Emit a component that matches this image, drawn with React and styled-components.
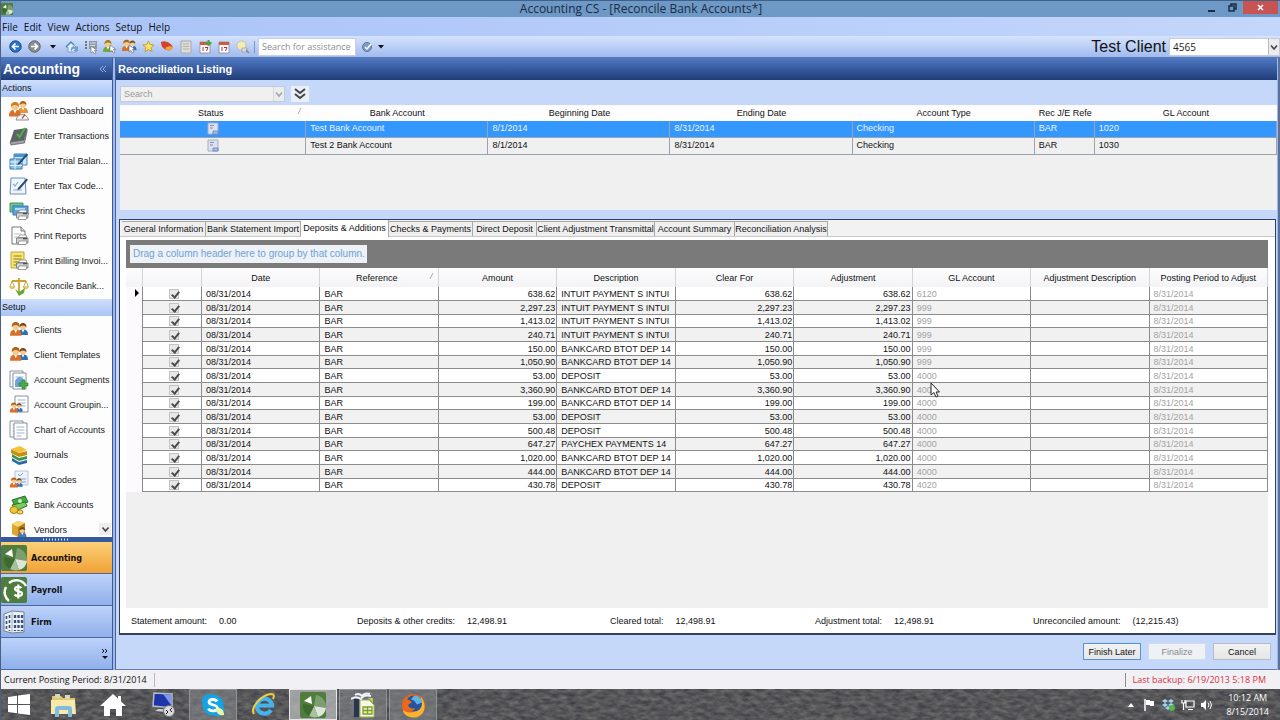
import { useState } from 'react';
import styled, { createGlobalStyle, ThemeProvider, css } from 'styled-components';

const theme = {
  fonts: {
    main: '"Liberation Sans", Arial, sans-serif',
    ui: '"Open Sans", "Noto Sans", sans-serif',
  },
  colors: {
    panel: '#c5d8fa',
    grey: '#f0f0f0',
    line: '#8c8c8c',
    select: '#3497fd',
    navy: '#1f3d78',
  },
};

const GlobalStyle = createGlobalStyle`
  * {
    box-sizing: border-box;
  }
  body {
    margin: 0;
    overflow: hidden;
    font-family: ${theme.fonts.main};
    font-size: 9px;
    color: #111;
  }
  button, input, select {
    font: inherit;
    color: inherit;
  }
  button {
    padding: 0;
    border: 0;
    background: none;
  }
`;

const Shell = styled.div`
  display: flex;
  flex-direction: column;
  height: 100vh;
  border-left: 1px solid #4d5f82;
  background: #9db9ee;
`;

/* title, menu and tool bars */

const TitleBar = styled.header`
  display: flex;
  align-items: center;
  flex: 0 0 17px;
  padding-right: 2px;
  border-top: 1px solid #3f6188;
  background: #6e98c6;
  svg {
    display: block;
  }
`;

const TitleText = styled.h1`
  flex: 1;
  margin: 0;
  padding-left: 68px;
  font: 400 12px/14px ${({ theme }) => theme.fonts.ui};
  text-align: center;
  color: #1b2c44;
`;

const WindowButton = styled.button`
  display: flex;
  justify-content: center;
  align-items: center;
  width: ${({ $close }) => ($close ? '35px' : '21px')};
  height: 13px;
  align-self: flex-start;
  background: ${({ $close }) => ($close ? '#c75453' : 'none')};
`;

const MenuBar = styled.nav`
  display: flex;
  align-items: center;
  gap: 6px;
  flex: 0 0 19px;
  padding-left: 1px;
  background: linear-gradient(90deg, #a9c3f8, #c3d6fb);
  font: 10px/18px ${({ theme }) => theme.fonts.ui};
`;

const ToolBar = styled.div`
  display: flex;
  align-items: center;
  gap: 3px;
  flex: 0 0 22px;
  padding-left: 6px;
  border-bottom: 1px solid #5a77ac;
  background: linear-gradient(#d6e3fd, #a0bbef);
`;

const ToolButton = styled.button`
  display: flex;
  justify-content: center;
  align-items: center;
  width: 16px;
  height: 18px;
`;

const Separator = styled.span`
  width: 1px;
  height: 12px;
  background: #7d95c4;
`;

const AssistInput = styled.input`
  width: 98px;
  height: 18px;
  padding: 0 3px;
  border: 1px solid #c4cfe4;
  background: #fff;
  font: 9px ${({ theme }) => theme.fonts.ui};
  &::placeholder {
    color: #8d8d8d;
  }
`;

const ClientLabel = styled.label`
  display: flex;
  align-items: center;
  gap: 3px;
  margin-left: auto;
  font: 16px ${({ theme }) => theme.fonts.main};
  color: #111;
`;

const SelectBox = styled.span`
  position: relative;
  display: flex;
  width: ${({ $width }) => $width};
  height: ${({ $height }) => $height};
  select {
    width: 100%;
    padding: 0 3px;
    border: 1px solid #c3cbda;
    border-radius: 0;
    appearance: none;
    background: ${({ $muted }) => ($muted ? '#f0f0f0' : '#fff')};
    color: ${({ $muted }) => ($muted ? '#9a9a9a' : '#1c1c1c')};
    font: ${({ $muted, theme }) => ($muted ? `9px ${theme.fonts.main}` : `10px ${theme.fonts.ui}`)};
  }
  svg {
    position: absolute;
    top: 1px;
    right: 1px;
    height: calc(100% - 2px);
    border-left: 1px solid ${({ $muted }) => ($muted ? '#d9d9d9' : '#bbb')};
    background: #ececec;
    pointer-events: none;
  }
`;

/* sidebar */

const Body = styled.div`
  display: flex;
  flex: 1;
  min-height: 0;
  padding-right: 1px;
  border-right: 2px solid #5b7199;
`;

const Sidebar = styled.aside`
  display: flex;
  flex-direction: column;
  flex: 0 0 112px;
  min-width: 0;
  border-right: 1px solid #3a5b99;
`;

const Heading = styled.h2`
  display: flex;
  justify-content: space-between;
  align-items: center;
  flex: 0 0 22px;
  margin: 0;
  padding: 0 5px 0 2px;
  background: linear-gradient(#5079c4, ${({ theme }) => theme.colors.navy});
  color: #fff;
  font: 700 ${({ $big }) => ($big ? '14px' : '11px')} ${({ theme }) => theme.fonts.main};
`;

const GroupTitle = styled.h3`
  flex: 0 0 17px;
  margin: 0;
  padding-left: 1px;
  background: linear-gradient(#cfdffd, #a9c4f6);
  font-size: 9px;
  font-weight: 400;
  line-height: 17px;
`;

const LinkList = styled.ul`
  position: relative;
  flex: ${({ $fill }) => ($fill ? '1 1 0' : '0 0 202px')};
  min-height: 0;
  margin: 0;
  padding: 1px 0;
  overflow: hidden;
  list-style: none;
  background: #fdfdfe;
  a {
    display: flex;
    align-items: center;
    gap: 5px;
    height: 25px;
    padding-left: 8px;
    color: #222;
    text-decoration: none;
    white-space: nowrap;
  }
  svg {
    flex: none;
  }
`;

const ScrollDown = styled.button`
  position: absolute;
  right: 1px;
  bottom: 2px;
  width: 12px;
  height: 12px;
  background: #eee;
  line-height: 0;
`;

const Grip = styled.div`
  flex: 0 0 5px;
  background: radial-gradient(circle, #dbe6fb 1px, transparent 1px) center / 3px 4px, #355a9c;
  border-left: 40px solid #355a9c;
  border-right: 42px solid #355a9c;
`;

const NavButton = styled.button`
  display: flex;
  align-items: center;
  gap: 4px;
  flex: 0 0 32px;
  border-bottom: 1px solid #4868a3;
  background: ${({ $active }) =>
    $active ? 'linear-gradient(#fcd07a, #f0a235)' : 'linear-gradient(#bdd2fa, #8fb0ea)'};
  font: 700 9px 'DejaVu Sans Condensed', 'DejaVu Sans', sans-serif;
  ${({ $more }) =>
    $more &&
    css`
      justify-content: flex-end;
      padding-right: 4px;
    `}
`;

/* content */

const Content = styled.main`
  display: flex;
  flex-direction: column;
  flex: 1;
  min-width: 0;
  margin-left: 2px;
  border-left: 1px solid #4a6396;
  border-bottom: 1px solid #6b7fa8;
  background: ${({ theme }) => theme.colors.panel};
`;

const SearchRow = styled.div`
  display: flex;
  align-items: center;
  gap: 6px;
  flex: 0 0 25px;
  padding: 3px 0 0 4px;
`;

const Expand = styled.button`
  display: flex;
  justify-content: center;
  align-items: center;
  width: 18px;
  height: 16px;
  background: #e9eef8;
`;

const ListingArea = styled.div`
  flex: 0 0 105px;
  margin-left: 4px;
  background: ${({ theme }) => theme.colors.grey};
`;

const Table = styled.table`
  width: 100%;
  table-layout: fixed;
  border-collapse: separate;
  border-spacing: 0;
  th,
  td {
    padding: 0 4px;
    overflow: hidden;
    font-weight: 400;
    white-space: nowrap;
  }
`;

const ListingTable = styled(Table)`
  th {
    height: 16px;
    background: #fdfdfe;
  }
  td {
    height: 17px;
    border-right: 1px solid #9aa3b0;
    border-bottom: 1px solid #9aa3b0;
    line-height: 14px;
    vertical-align: top;
  }
  td:first-child {
    text-align: center;
  }
  svg {
    display: inline-block;
    vertical-align: middle;
  }
`;

const ListingRow = styled.tr`
  background: ${({ $selected, theme }) => ($selected ? theme.colors.select : '#f0f0f0')};
  color: ${({ $selected }) => ($selected ? '#eaf4ff' : 'inherit')};
`;

const TabPanel = styled.section`
  display: flex;
  flex-direction: column;
  flex: 1;
  min-height: 0;
  margin: 9px 1px 0 3px;
  border: 1px solid #33415e;
  border-bottom-width: 2px;
  background: #fff;
`;

const TabList = styled.div`
  display: flex;
  align-items: flex-end;
  flex: 0 0 17px;
  padding-left: 2px;
  border-bottom: 1px solid #c9c9c9;
  background: #f2f2f2;
`;

const Tab = styled.button`
  width: ${({ $width }) => $width}px;
  height: 15px;
  border: 1px solid #a9a9a9;
  border-width: 1px 1px 0 0;
  background: #efefef;
  white-space: nowrap;
  line-height: 14px;
  ${({ $active }) =>
    $active &&
    css`
      height: 17px;
      margin-bottom: -1px;
      padding-bottom: 2px;
      border-top: 0;
      background: #fff;
    `}
`;

const GridArea = styled.div`
  position: relative;
  flex: 1;
  min-height: 0;
  margin: 3px 7px 0 6px;
  background: ${({ theme }) => theme.colors.grey};
`;

const GroupBar = styled.div`
  display: flex;
  align-items: center;
  height: 28px;
  padding-left: 4px;
  background: #7a7a7a;
  span {
    padding: 0 2px 0 3px;
    background: #eef1f6;
    color: #6ba4d6;
    font: 10px/18px ${({ theme }) => theme.fonts.main};
  }
`;

const EntryTable = styled(Table)`
  background: #fdfafd;
  th {
    height: 19px;
    border-right: 1px solid #d5d5d8;
    background: linear-gradient(#fdfdfe, #f3f3f5);
  }
  td {
    height: 14px;
    padding: 0 1px 0 4px;
    border-right: 1px solid ${({ theme }) => theme.colors.line};
    border-bottom: 1px solid ${({ theme }) => theme.colors.line};
    line-height: 12px;
  }
  td:first-child {
    border-bottom: 0;
    background: #fdfafd;
  }
  tbody tr:nth-child(3n) td {
    height: 13px;
  }
  tbody tr {
    background: #fff;
  }
  tbody tr:nth-child(even) {
    background: #f1f1f1;
  }
`;

const Money = styled.td`
  text-align: right;
`;

const Faded = styled.td`
  color: #a3a3a3;
`;

const CheckCell = styled.td`
  text-align: center;
  font-size: 0;
`;

const Check = styled.input`
  display: inline-block;
  width: 10px;
  height: 10px;
  margin: 0;
  border: 1px solid #c3c3c3;
  appearance: none;
  background: #e8e8e8;
  vertical-align: middle;
  &:checked::after {
    content: '';
    display: block;
    width: 3px;
    height: 6px;
    margin: 0 0 0 3px;
    border: solid #4c4c4c;
    border-width: 0 2px 2px 0;
    transform: rotate(40deg);
  }
`;

const SortIcon = styled.svg`
  float: right;
  width: 5px;
  height: 6px;
`;

const Cursor = styled.svg`
  position: absolute;
  left: 804px;
  top: 142px;
`;

const Totals = styled.dl`
  display: grid;
  grid-template-columns: 226fr 253fr 205fr 218fr 242fr;
  align-items: center;
  flex: 0 0 25px;
  margin: 0;
  padding-left: 11px;
  div {
    display: flex;
    gap: 12px;
  }
  dd {
    margin: 0;
  }
`;

const Actions = styled.div`
  display: flex;
  justify-content: flex-end;
  gap: 7px;
  flex: 0 0 34px;
  padding: 8px 6px 0 0;
`;

const Button = styled.button`
  width: 58px;
  height: 17px;
  border: 1px solid ${({ $primary }) => ($primary ? '#4f94dc' : '#b5bccb')};
  background: linear-gradient(#f2f2f2, #e6e6e6);
  &:disabled {
    border-color: #d3dbe9;
    background: #eef1f5;
    color: #8b8b8b;
  }
`;

const StatusBar = styled.footer`
  display: flex;
  justify-content: space-between;
  align-items: center;
  flex: 0 0 19px;
  padding: 0 14px 0 3px;
  background: #f1f0f4;
  font: 9px ${({ theme }) => theme.fonts.ui};
  span {
    line-height: 14px;
  }
`;

const Posting = styled.span`
  padding-right: 7px;
  border-right: 1px solid #b9b9bd;
`;

const Backup = styled.span`
  padding-left: 7px;
  border-left: 1px solid #8c8c90;
  color: #d8313f;
`;

/* taskbar */

const Taskbar = styled.div`
  position: relative;
  display: flex;
  gap: 2px;
  flex: 0 0 31px;
  background: #54585d;
`;

const Texture = styled.svg`
  position: absolute;
  width: 100%;
  height: 100%;
`;

const TaskButton = styled.button`
  position: relative;
  display: flex;
  justify-content: center;
  align-items: center;
  width: ${({ $start }) => ($start ? '36px' : '48px')};
  ${({ $open }) =>
    $open &&
    css`
      border: 1px solid #8f9296;
      border-bottom: 0;
      background: rgba(140, 142, 145, 0.5);
    `}
  ${({ $front }) =>
    $front &&
    css`
      border: 1px solid #e6e6e6;
      background: rgba(190, 192, 194, 0.7);
    `}
`;

const Tray = styled.div`
  position: relative;
  display: flex;
  align-items: center;
  gap: 6px;
  margin-left: auto;
  padding-right: 11px;
  color: #fff;
`;

const Clock = styled.time`
  padding-left: 7px;
  font: 9px/14px ${({ theme }) => theme.fonts.ui};
  text-align: center;
`;

/* drawings */

const Chevron = ({ color = '#444' }) => (
  <svg width="11" height="12" viewBox="0 0 10 12">
    <path d="M2 4.500 5 8l3-3.500" fill="none" stroke={color} strokeWidth="1.600" />
  </svg>
);

const Caret = () => (
  <svg width="6" height="4" viewBox="0 0 6 4">
    <path d="M0 0h6L3 3.500z" fill="#111" />
  </svg>
);

const SortMark = () => (
  <SortIcon viewBox="0 0 5 6">
    <path d="M1 6 4 0" stroke="#aaa" />
  </SortIcon>
);

const Figure = ({ x, y, hair, coat }) => (
  <g transform={`translate(${x} ${y})`}>
    <path d="M0 12c0-4 1.500-5.500 5-5.500s5 1.500 5 5.500z" fill={coat} />
    <path d="M3.500 6.500 5 9.500l1.500-3z" fill="#fff" />
    <circle cx="5" cy="3.700" r="3" fill="#f6c98d" />
    <path d="M1.700 4.500C1 1.500 3 0 5 0s4 1.500 3.300 4.500C7.500 2.800 6.500 2.800 5 2.500 3.500 2.800 2.500 2.800 1.700 4.500z" fill={hair} />
  </g>
);

const People = () => (
  <>
    <Figure x="9" y="3" hair="#7a4a1c" coat="#2f6fb8" />
    <g transform="translate(1 2) scale(1.150)">
      <Figure x="0" y="0" hair="#b0631a" coat="#d9702a" />
    </g>
  </>
);

const Printer = () => (
  <g>
    <path d="M9 11.500 11 9h6l1 2.500z" fill="#fff" stroke="#777" strokeWidth=".7" />
    <path d="M7.500 12h11.500v5H7.500z" fill="#d3d6da" stroke="#666" strokeWidth=".7" />
    <path d="M10 15h8l-1 3.500H9z" fill="#fff" stroke="#777" strokeWidth=".7" />
    <path d="M14 12.700h4" stroke="#444" strokeWidth="1.200" />
  </g>
);

const Sheet = ({ x = 2, y = 1, fill = '#fff', stroke = '#7c8794', ink = '#9eb4cf' }) => (
  <g transform={`translate(${x} ${y})`}>
    <path d="M0 0h13v16H0z" fill={fill} stroke={stroke} strokeWidth=".9" />
    <path d="M2.500 4h8M2.500 7h8M2.500 10h8M2.500 13h5" stroke={ink} strokeWidth="1" />
  </g>
);

const Pen = () => <path d="m9 12 8.500-9.500 1.500 1.200-8 9.300-2.800 1.200z" fill="#274b75" />;

const glyphs = {
  dashboard: (
    <>
      <Figure x="9" y="0" hair="#b0671c" coat="#e2933b" />
      <g transform="translate(0 1) scale(1.200)">
        <Figure x="0" y="0" hair="#c98024" coat="#d9702a" />
      </g>
      <path d="M7 19a6.500 7.500 0 0 1 12.500 0z" fill="#f3f3f3" stroke="#777" strokeWidth=".8" />
      <path d="m13 17.500 3-4" stroke="#c22" strokeWidth="1.200" />
    </>
  ),
  book: (
    <>
      <path d="m5 4 13-2-3 12-14 2z" fill="#5c6266" />
      <path d="m1 16 14-2 3-11v3l-2.500 11L2 19z" fill="#9fa4a8" stroke="#444" strokeWidth=".6" />
      <path d="m8 8 2.500 3L16 2" fill="none" stroke="#4fae45" strokeWidth="2" />
    </>
  ),
  balance: (
    <>
      <path d="M5 3h13v11H5z" fill="#cfe5f8" stroke="#4a87bd" />
      <path d="M1 8h12v10H1z" fill="#8ac0e8" stroke="#3b7ab3" />
      <path d="M1 11h12M1 14.500h12M6 8v10" stroke="#e8f4fd" />
      <path d="M5 3h13v3H5z" fill="#4b93ce" />
      <Pen />
    </>
  ),
  taxcode: (
    <>
      <path d="M2 2h14l1 16H1z" fill="#eff5fb" stroke="#6b8fb5" />
      <path d="m4 8 2 2 3-4M4 14h9" fill="none" stroke="#8bb0d6" strokeWidth="1.200" />
      <Pen />
    </>
  ),
  checks: (
    <>
      <path d="M1 2h13v9H1z" fill="#6fc18a" stroke="#3b9a62" />
      <path d="M4 5h15v9H4z" fill="#5aa5dd" stroke="#3579b4" />
      <path d="M6 8h10" stroke="#d9edfb" strokeWidth="1.500" />
      <Printer />
    </>
  ),
  reports: (
    <>
      <path d="M3 1h9l4 4v13H3z" fill="#fff" stroke="#777" />
      <path d="M12 1v4h4" fill="#ddd" stroke="#777" />
      <path d="M5 8h7M5 11h4" stroke="#bbb" />
      <Printer />
    </>
  ),
  billing: (
    <>
      <Sheet fill="#f7e675" stroke="#b79e29" ink="#8f7d2a" />
      <Printer />
    </>
  ),
  scales: (
    <>
      <path d="M10 2v14M3 5h14" stroke="#cba22b" strokeWidth="1.800" />
      <path d="M3 5 .8 11h4.800zM17 5l-2.500 6h4.800z" fill="none" stroke="#b89327" strokeWidth=".8" />
      <path d="M.5 11h5.500c-.5 3-5 3-5.500 0zM14 11h5.500c-.5 3-5 3-5.500 0z" fill="#e6c545" />
      <path d="m6 13 4 3 6-4-1 5-5 3z" fill="#67a839" />
    </>
  ),
  people: <People />,
  segments: (
    <>
      <Sheet x={1} y={1} />
      <Sheet x={4} y={3} />
      <path d="M6 11c3-5 6-5 9-1v7H6z" fill="#6da3d8" />
      <path d="M13 10h3v3h3v3h-3v3h-3v-3h-3v-3h3z" fill="#46ad46" stroke="#277a2a" strokeWidth=".6" />
    </>
  ),
  grouping: (
    <>
      <Sheet x={6} y={1} />
      <g transform="translate(0 6) scale(.72)">
        <People />
      </g>
    </>
  ),
  chart: (
    <>
      <Sheet x={1} y={1} />
      <Sheet x={5} y={3} />
    </>
  ),
  journals: (
    <>
      <path d="m3 13 7 4 8-2v3l-8 2-7-4z" fill="#2f6aa8" />
      <path d="m3 9 7 4 8-2v3l-8 2-7-4z" fill="#3f9447" />
      <path d="m2 4 8 4 8-2v4l-8 2-8-4z" fill="#c48f15" />
      <path d="m2 4 9-3 7 4-8 3z" fill="#f1c437" />
    </>
  ),
  taxes: (
    <>
      <path d="M6 1h13v14H6z" fill="#eef3fa" stroke="#aebfd6" strokeWidth=".9" />
      <path d="m9 4 2 2 3-3M9 9h8M9 12h8" fill="none" stroke="#7f9fc9" />
      <g transform="translate(0 6) scale(.72)">
        <People />
      </g>
    </>
  ),
  bank: (
    <>
      <path d="m3 5 13-4 3 6-13 4z" fill="#43a944" stroke="#26742b" />
      <path d="m3 10 13-3 2 4-12 5z" fill="#7fca5b" stroke="#26742b" />
      <circle cx="11" cy="6" r="2" fill="#c9ecc0" />
      <ellipse cx="5" cy="15" rx="4" ry="3.500" fill="#edc63b" stroke="#a98212" />
      <ellipse cx="11" cy="17" rx="3" ry="2" fill="#f2d862" stroke="#a98212" />
    </>
  ),
  vendors: (
    <>
      <path d="m3 4 6-3 7 2v10l-7 4-6-3z" fill="#dda72c" />
      <path d="m9 7 7-4v10l-7 4z" fill="#b57e17" />
      <path d="m3 4 6 3 7-4-7-2z" fill="#f6d677" />
      <g transform="translate(9 7) scale(.85)">
        <Figure x="0" y="0" hair="#7a4a1c" coat="#4b78b0" />
      </g>
    </>
  ),
};

const Glyph = ({ name, size = 20 }) => (
  <svg width={size} height={size} viewBox="0 0 20 20" aria-hidden="true">
    {glyphs[name]}
  </svg>
);

const PieLogo = ({ size = 26 }) => (
  <svg width={size} height={size} viewBox="0 0 26 26">
    <rect width="26" height="26" rx="2" fill="#4f7d3d" />
    <path d="M14 14 16 3a12 12 0 0 1 10 13z" fill="#7d9f70" />
    <path d="M14 14l12 2a11 11 0 0 1-8 9z" fill="#dde6d9" />
    <path d="M14 14l4 11A12 12 0 0 1 9 24z" fill="#a9c09f" />
    <path d="M14 14 9 24A12 12 0 0 1 3 12z" fill="#3d6a2f" />
    <path d="M4 9 11 4l1 8z" fill="#fff" />
  </svg>
);

const PayrollLogo = () => (
  <svg width="26" height="26" viewBox="0 0 26 26">
    <rect width="26" height="26" rx="2" fill="#4f7d3d" />
    <path d="M8 6a11 11 0 0 1 17 3M5 10a11 11 0 0 0 3 14" fill="none" stroke="#fff" strokeWidth="2.500" />
    <path
      d="M20.500 11c-1-1.500-6.500-2-6.500 1s7 1.500 7 4.500-6 3-7.500 1M17.300 7.500v14"
      fill="none"
      stroke="#fff"
      strokeWidth="2.200"
    />
  </svg>
);

const FirmLogo = () => (
  <svg width="26" height="26" viewBox="0 0 26 26">
    <path d="m3 5 8-3 12 1v20l-12 1-8-2z" fill="#eef1f5" stroke="#77808c" />
    <path d="M11 2v22" stroke="#a5adb9" />
    <path d="M5.500 7v14M8.500 6v16" stroke="#34527f" strokeWidth="1.600" strokeDasharray="3 2" />
    <path d="M14 6v16M17.500 6v16M21 6v16" stroke="#34527f" strokeWidth="2.300" strokeDasharray="3 2" />
  </svg>
);

const Round = ({ fill, dark, flip }) => (
  <svg width="13" height="13" viewBox="0 0 13 13">
    <circle cx="6.500" cy="6.500" r="5.700" fill={fill} stroke={dark} />
    <path
      d="M10 6.500H4M6.500 3.500l-3 3 3 3"
      fill="none"
      stroke="#fff"
      strokeWidth="1.700"
      transform={flip ? 'rotate(180 6.500 6.500)' : undefined}
    />
  </svg>
);

const Calendar = ({ plus }) => (
  <svg width="13" height="14" viewBox="0 0 13 14">
    <path d="M1 2h10v11H1z" fill="#fff" stroke="#888" strokeWidth=".8" />
    <path d="M1 2h10v3H1z" fill="#cf5a42" />
    <path d="M4 7v4M6 7.500h3L7.500 11" fill="none" stroke="#a33" />
    {plus && <path d="M9.500 0v6M6.500 3h6" stroke="#46a63c" strokeWidth="2" />}
  </svg>
);

const Pointer = () => (
  <path d="M7 6v7l2-1.500L10.500 14l1.500-.8-1.500-2.700H13z" fill="#fff" stroke="#666" strokeWidth=".6" />
);

const tools = [
  {
    name: 'Home',
    art: (
      <svg width="14" height="14" viewBox="0 0 14 14">
        <path d="m1 7 5-5 5 5v5H3V7z" fill="#e8f0f8" stroke="#7c9cc0" />
        <path d="M6 12c-1-5 2-7 5-5l2-1v5H8l2-2c-2-1-3 1-4 3z" fill="#6f9fd0" />
        <path d="m1 7 5-5 3 3" fill="none" stroke="#4f86b8" strokeWidth="1.500" />
      </svg>
    ),
  },
  {
    name: 'Select list',
    art: (
      <svg width="14" height="14" viewBox="0 0 14 14">
        <path d="M1 2h2M1 5h2M1 8h2" stroke="#4c5866" strokeWidth="1.500" />
        <path d="M5 1h8v8H5z" fill="#8f99a5" />
        <path d="M6 3h6M6 5.500h5" stroke="#d8dfe8" />
        <Pointer />
      </svg>
    ),
  },
  {
    name: 'Select client',
    art: (
      <svg width="14" height="15" viewBox="0 0 14 15">
        <Figure x="0" y="1" hair="#a97a1c" coat="#6da942" />
        <Pointer />
      </svg>
    ),
  },
  {
    name: 'Select clients',
    art: (
      <svg width="15" height="15" viewBox="0 0 15 15">
        <g transform="translate(-1 -1) scale(.82)">
          <People />
        </g>
        <Pointer />
      </svg>
    ),
  },
  {
    name: 'Favorites',
    art: (
      <svg width="13" height="13" viewBox="0 0 14 14">
        <path
          d="m7 1 1.800 4 4.200.4-3.200 2.800 1 4.300L7 10.200l-3.800 2.300 1-4.300L1 5.400 5.200 5z"
          fill="#fbe268"
          stroke="#c59a20"
        />
      </svg>
    ),
  },
  {
    name: 'Tags',
    art: (
      <svg width="14" height="13" viewBox="0 0 14 13">
        <path d="M1 2c4-2 9 0 12 5-1 3-4 4-6 3-4-1-6-4-6-8z" fill="#d7402a" />
        <path d="M5 8c3-2 6-2 8-1-1 3-4 4-6 3z" fill="#f2a632" />
      </svg>
    ),
  },
  {
    name: 'Notes',
    art: (
      <svg width="12" height="14" viewBox="0 0 12 14">
        <path d="M1 1h10v12H1z" fill="#dddcd3" stroke="#aaa" />
        <path d="M3 4h6M3 6.500h6M3 9h6" stroke="#b5b5ad" />
      </svg>
    ),
  },
  { name: 'Add event', art: <Calendar plus /> },
  { name: 'Calendar', art: <Calendar /> },
  {
    name: 'Find',
    art: (
      <svg width="14" height="14" viewBox="0 0 14 14">
        <circle cx="5.500" cy="5.500" r="4.500" fill="#f1eeb0" stroke="#c5c5a8" />
        <path d="M6 8h5v4H6z" fill="#d8dce2" stroke="#999" strokeWidth=".7" />
        <path d="m10 10 3 3" stroke="#888" strokeWidth="1.500" />
      </svg>
    ),
  },
];

const StatusIcon = () => (
  <svg width="12" height="13" viewBox="0 0 12 13">
    <path d="M1 1h10v11H1z" fill="#dde2ee" stroke="#a3aec6" />
    <path d="M3 3.500h4M3 6h3" stroke="#7f8db0" />
    <path d="M6 9h5v3H6z" fill="#a9c0e6" stroke="#5f82bd" strokeWidth=".8" />
  </svg>
);

/* data */

const menus = ['File', 'Edit', 'View', 'Actions', 'Setup', 'Help'];

const actionLinks = [
  ['dashboard', 'Client Dashboard'],
  ['book', 'Enter Transactions'],
  ['balance', 'Enter Trial Balan...'],
  ['taxcode', 'Enter Tax Code...'],
  ['checks', 'Print Checks'],
  ['reports', 'Print Reports'],
  ['billing', 'Print Billing Invoi...'],
  ['scales', 'Reconcile Bank...'],
];

const setupLinks = [
  ['people', 'Clients'],
  ['people', 'Client Templates'],
  ['segments', 'Account Segments'],
  ['grouping', 'Account Groupin...'],
  ['chart', 'Chart of Accounts'],
  ['journals', 'Journals'],
  ['taxes', 'Tax Codes'],
  ['bank', 'Bank Accounts'],
  ['vendors', 'Vendors'],
];

const accounts = [
  ['Test Bank Account', '8/1/2014', '8/31/2014', 'Checking', 'BAR', '1020'],
  ['Test 2 Bank Account', '8/1/2014', '8/31/2014', 'Checking', 'BAR', '1030'],
];

const tabs = [
  ['General Information', 84],
  ['Bank Statement Import', 95],
  ['Deposits & Additions', 88],
  ['Checks & Payments', 84],
  ['Direct Deposit', 64],
  ['Client Adjustment Transmittal', 118],
  ['Account Summary', 80],
  ['Reconciliation Analysis', 93],
];

const columns = [
  'Date',
  'Reference',
  'Amount',
  'Description',
  'Clear For',
  'Adjustment',
  'GL Account',
  'Adjustment Description',
  'Posting Period to Adjust',
];

const entries = [
  ['638.62', 'INTUIT PAYMENT S INTUI', '6120'],
  ['2,297.23', 'INTUIT PAYMENT S INTUI', '999'],
  ['1,413.02', 'INTUIT PAYMENT S INTUI', '999'],
  ['240.71', 'INTUIT PAYMENT S INTUI', '999'],
  ['150.00', 'BANKCARD BTOT DEP 14', '999'],
  ['1,050.90', 'BANKCARD BTOT DEP 14', '999'],
  ['53.00', 'DEPOSIT', '4000'],
  ['3,360.90', 'BANKCARD BTOT DEP 14', '4000'],
  ['199.00', 'BANKCARD BTOT DEP 14', '4000'],
  ['53.00', 'DEPOSIT', '4000'],
  ['500.48', 'DEPOSIT', '4000'],
  ['647.27', 'PAYCHEX PAYMENTS 14', '4000'],
  ['1,020.00', 'BANKCARD BTOT DEP 14', '4000'],
  ['444.00', 'BANKCARD BTOT DEP 14', '4000'],
  ['430.78', 'DEPOSIT', '4020'],
];

const totals = [
  ['Statement amount:', '0.00'],
  ['Deposits & other credits:', '12,498.91'],
  ['Cleared total:', '12,498.91'],
  ['Adjustment total:', '12,498.91'],
  ['Unreconciled amount:', '(12,215.43)'],
];

const taskIcons = [
  {
    name: 'Start',
    start: true,
    art: (
      <svg width="22" height="21" viewBox="0 0 22 21">
        <path d="m0 3 9-1.300V10H0zM10 1.500 22 0v10H10zM0 11h9v8.300L0 18zM10 11h12v10l-12-1.500z" fill="#fff" />
      </svg>
    ),
  },
  {
    name: 'File Explorer',
    art: (
      <svg width="27" height="24" viewBox="0 0 27 24">
        <path d="M2 3h9l2 2h12v16H2z" fill="#e4c668" />
        <path d="M5 1h5v4H5zM15 2h5v4h-5z" fill="#d3d9c0" />
        <path d="M1 7h24l1 14H1z" fill="#f7e9ae" />
        <path d="M5 24v-8c0-2 1-3 3-3h11c2 0 3 1 3 3v8h-4v-7H9v7z" fill="#7fbde0" />
      </svg>
    ),
  },
  {
    name: 'Home',
    art: (
      <svg width="26" height="22" viewBox="0 0 26 22">
        <path d="M13 0 0 12h4v10h6v-7h6v7h6V12h4l-5-4.600V2h-3v2.600z" fill="#fff" />
      </svg>
    ),
  },
  {
    name: 'Remote Desktop',
    art: (
      <svg width="24" height="25" viewBox="0 0 24 25">
        <path d="m3 1 18 1v14L2 14z" fill="#1d35a8" stroke="#b5bcc6" strokeWidth="1.500" />
        <path d="m12 2 8 1v10z" fill="#7d97ec" />
        <path d="M7 17h7v3l-10-1z" fill="#c9cdd2" />
        <circle cx="18" cy="19" r="5.500" fill="#dcdcdc" stroke="#777" />
        <path d="m15 18 2 2-2 2M21 16l-2 2 2 2" fill="none" stroke="#222" />
      </svg>
    ),
  },
  {
    name: 'Skype',
    open: true,
    art: (
      <svg width="25" height="25" viewBox="0 0 25 25">
        <circle cx="8" cy="8" r="7" fill="#12a5e4" />
        <circle cx="12" cy="12" r="10.500" fill="#12a5e4" />
        <circle cx="17" cy="17" r="6.500" fill="#12a5e4" />
        <path
          d="M16 8.500C14.500 5.500 8 6 8 9c0 4 8.500 2 8.500 6 0 3.500-7.500 4-9 .5"
          fill="none"
          stroke="#fff"
          strokeWidth="2.800"
        />
        <path d="M15 15c5-1 8 2 8 7-4 1-8-1-8-7z" fill="#eff3a2" />
      </svg>
    ),
  },
  {
    name: 'Internet Explorer',
    art: (
      <svg width="25" height="25" viewBox="0 0 25 25">
        <path d="M20 18a7.500 7.500 0 1 1 1-4.500H8" fill="none" stroke="#45b3ea" strokeWidth="4.200" />
        <path d="M3 22C-1 16 10 3 20 2c4 0 3 3 2 5" fill="none" stroke="#f3cd3f" strokeWidth="2" />
      </svg>
    ),
  },
  { name: 'Accounting CS', front: true, art: <PieLogo /> },
  {
    name: 'OpenOffice',
    open: true,
    art: (
      <svg width="24" height="26" viewBox="0 0 24 26">
        <path d="M3 7h5v18H3z" fill="#26384f" />
        <path d="M9 8h9l5 5v12H9z" fill="#f5f7ea" stroke="#9db34b" />
        <path d="M12 15h9v7h-9zM12 18.500h9M16.500 15v7" fill="#e5efb7" stroke="#7f9f26" strokeWidth="1.300" />
        <path d="M0 7c4-3 7-2 10 0 2-4 6-4 10-3M4 3c3-2 5-1 7 1 2-3 5-3 8-2" fill="none" stroke="#eef3f8" strokeWidth="2" />
        <path d="m17 6 5 5v-5z" fill="#b8cf4c" />
      </svg>
    ),
  },
  {
    name: 'Firefox',
    open: true,
    art: (
      <svg width="25" height="25" viewBox="0 0 25 25">
        <circle cx="12.500" cy="12.500" r="11.500" fill="#e8641b" />
        <path d="M20 4c5 6 6 18-6 20.500C6 25 2 20 2 17c8 6 18 1 18-13z" fill="#fbb42c" />
        <circle cx="13" cy="10.500" r="8" fill="#26549c" />
        <path d="M13 2.500c5 0 8 3.500 8 7l-5 2-3-4-3-1z" fill="#5fb3e4" />
        <path d="M2 5c1 2 4 1 6 2l3 2-4 3c1 3 3 4 7 3-2 5-9 4-11-1z" fill="#ea6a1c" />
      </svg>
    ),
  },
];

const App = () => {
  const [activeTab, setActiveTab] = useState('Deposits & Additions');

  return (
    <ThemeProvider theme={theme}>
      <GlobalStyle />
      <Shell>
        <TitleBar>
          <PieLogo size={12} />
          <TitleText>Accounting CS - [Reconcile Bank Accounts*]</TitleText>
          <WindowButton aria-label="Minimize">
            <svg width="8" height="8">
              <path d="M0 7h7" stroke="#1b2c44" strokeWidth="2" />
            </svg>
          </WindowButton>
          <WindowButton aria-label="Restore">
            <svg width="9" height="9">
              <path d="M1 3h5v5H1zM3 3V1h5v5H6" fill="none" stroke="#1b2c44" strokeWidth="1.500" />
            </svg>
          </WindowButton>
          <WindowButton $close aria-label="Close">
            <svg width="7" height="7">
              <path d="m1 1 5 5M6 1 1 6" stroke="#fff" strokeWidth="1.500" />
            </svg>
          </WindowButton>
        </TitleBar>

        <MenuBar>
          {menus.map((menu) => (
            <button key={menu}>{menu}</button>
          ))}
        </MenuBar>

        <ToolBar>
          <ToolButton aria-label="Back">
            <Round fill="#2a72c4" dark="#174a8c" />
          </ToolButton>
          <ToolButton aria-label="Forward">
            <Round fill="#8b8d90" dark="#5e6064" flip />
          </ToolButton>
          <ToolButton aria-label="History">
            <Caret />
          </ToolButton>
          {tools.map(({ name, art }) => (
            <ToolButton key={name} aria-label={name}>
              {art}
            </ToolButton>
          ))}
          <Separator />
          <AssistInput placeholder="Search for assistance" aria-label="Search for assistance" />
          <ToolButton aria-label="Help">
            <svg width="11" height="12" viewBox="0 0 11 12">
              <circle cx="5" cy="6" r="4.500" fill="#7f9cc4" stroke="#5d7699" />
              <path d="m3 6 2 2 4-5" fill="none" stroke="#fff" strokeWidth="1.500" />
            </svg>
          </ToolButton>
          <Caret />
          <ClientLabel>
            Test Client
            <SelectBox $width="111px" $height="18px">
              <select defaultValue="4565">
                <option>4565</option>
              </select>
              <Chevron />
            </SelectBox>
          </ClientLabel>
        </ToolBar>

        <Body>
          <Sidebar>
            <Heading $big>
              Accounting
              <svg width="8" height="8">
                <path d="M4 1 1 4l3 3M7 1 4 4l3 3" fill="none" stroke="#8fb0ea" />
              </svg>
            </Heading>
            <GroupTitle>Actions</GroupTitle>
            <LinkList>
              {actionLinks.map(([icon, label]) => (
                <li key={label}>
                  <a href="#actions">
                    <Glyph name={icon} />
                    {label}
                  </a>
                </li>
              ))}
            </LinkList>
            <GroupTitle>Setup</GroupTitle>
            <LinkList $fill>
              {setupLinks.map(([icon, label]) => (
                <li key={label}>
                  <a href="#setup">
                    <Glyph name={icon} />
                    {label}
                  </a>
                </li>
              ))}
              <ScrollDown aria-label="Scroll down">
                <Chevron />
              </ScrollDown>
            </LinkList>
            <Grip />
            <NavButton $active>
              <PieLogo />
              Accounting
            </NavButton>
            <NavButton>
              <PayrollLogo />
              Payroll
            </NavButton>
            <NavButton>
              <FirmLogo />
              Firm
            </NavButton>
            <NavButton $more aria-label="More">
              <svg width="6" height="12">
                <path d="m0 1 2 2-2 2M3 1l2 2-2 2" fill="none" stroke="#111" />
                <path d="M0 8h6l-3 3z" fill="#111" />
              </svg>
            </NavButton>
          </Sidebar>

          <Content>
            <Heading>Reconciliation Listing</Heading>
            <SearchRow>
              <SelectBox $width="165px" $height="16px" $muted>
                <select aria-label="Search" defaultValue="Search">
                  <option>Search</option>
                </select>
                <Chevron color="#a5a5a5" />
              </SelectBox>
              <Expand aria-label="Expand">
                <svg width="12" height="12">
                  <path d="m1 1 5 4 5-4M1 6l5 4 5-4" fill="none" stroke="#444" strokeWidth="2" />
                </svg>
              </Expand>
            </SearchRow>
            <ListingArea>
              <ListingTable>
                <colgroup>
                  <col style={{ width: '16.1%' }} />
                  <col />
                  <col />
                  <col />
                  <col />
                  <col style={{ width: '5.2%' }} />
                  <col />
                </colgroup>
                <thead>
                  <tr>
                    <th>
                      Status
                      <SortMark />
                    </th>
                    <th>Bank Account</th>
                    <th>Beginning Date</th>
                    <th>Ending Date</th>
                    <th>Account Type</th>
                    <th>Rec J/E Refe</th>
                    <th>GL Account</th>
                  </tr>
                </thead>
                <tbody>
                  {accounts.map((account, i) => (
                    <ListingRow key={account[0]} $selected={i === 0}>
                      <td>
                        <StatusIcon />
                      </td>
                      {account.map((value, j) => (
                        <td key={j}>{value}</td>
                      ))}
                    </ListingRow>
                  ))}
                </tbody>
              </ListingTable>
            </ListingArea>

            <TabPanel>
              <TabList role="tablist">
                {tabs.map(([label, width]) => (
                  <Tab
                    key={label}
                    role="tab"
                    $width={width}
                    $active={label === activeTab}
                    onClick={() => setActiveTab(label)}
                  >
                    {label}
                  </Tab>
                ))}
              </TabList>
              <GridArea>
                <GroupBar>
                  <span>Drag a column header here to group by that column.</span>
                </GroupBar>
                <EntryTable>
                  <colgroup>
                    <col style={{ width: 17 }} />
                    <col style={{ width: 59 }} />
                    {columns.map((column) => (
                      <col key={column} />
                    ))}
                  </colgroup>
                  <thead>
                    <tr>
                      <th />
                      <th />
                      {columns.map((column) => (
                        <th key={column}>
                          {column}
                          {column === 'Reference' && <SortMark />}
                        </th>
                      ))}
                    </tr>
                  </thead>
                  <tbody>
                    {entries.map(([amount, description, gl], i) => (
                      <tr key={i}>
                        <td>
                          {i === 0 && (
                            <svg width="10" height="8">
                              <path d="M5 0v8l4-4z" fill="#000" />
                            </svg>
                          )}
                        </td>
                        <CheckCell>
                          <Check type="checkbox" defaultChecked aria-label={`Cleared ${i + 1}`} />
                        </CheckCell>
                        <td>08/31/2014</td>
                        <td>BAR</td>
                        <Money>{amount}</Money>
                        <td>{description}</td>
                        <Money>{amount}</Money>
                        <Money>{amount}</Money>
                        <Faded>{gl}</Faded>
                        <td />
                        <Faded>8/31/2014</Faded>
                      </tr>
                    ))}
                  </tbody>
                </EntryTable>
                <Cursor width="10" height="16" viewBox="0 0 10 16">
                  <path d="M1 1v12l2.800-2.500L6 15l2-1-2-4h3.500z" fill="#fff" stroke="#222" />
                </Cursor>
              </GridArea>
              <Totals>
                {totals.map(([label, value]) => (
                  <div key={label}>
                    <dt>{label}</dt>
                    <dd>{value}</dd>
                  </div>
                ))}
              </Totals>
            </TabPanel>
            <Actions>
              <Button $primary>Finish Later</Button>
              <Button disabled>Finalize</Button>
              <Button>Cancel</Button>
            </Actions>
          </Content>
        </Body>

        <StatusBar>
          <Posting>Current Posting Period: 8/31/2014</Posting>
          <Backup>Last backup: 6/19/2013 5:18 PM</Backup>
        </StatusBar>

        <Taskbar>
          <Texture>
            <filter id="rock" colorInterpolationFilters="sRGB">
              <feTurbulence type="fractalNoise" baseFrequency="0.12 0.25" numOctaves="4" seed="7" />
              <feColorMatrix values="0.28 0 0 0 0.2  0.27 0 0 0 0.205  0.22 0 0 0 0.240  0 0 0 0 1" />
            </filter>
            <rect width="100%" height="100%" filter="url(#rock)" />
          </Texture>
          {taskIcons.map(({ name, art, start, open, front }) => (
            <TaskButton key={name} aria-label={name} $start={start} $open={open} $front={front}>
              {art}
            </TaskButton>
          ))}
          <Tray>
            <svg width="6" height="4">
              <path d="M0 4h6L3 0z" fill="#fff" />
            </svg>
            <svg width="16" height="12" viewBox="0 0 16 12">
              <path d="M5 0v12" stroke="#fff" strokeWidth="1.500" />
              <path d="M6 1h4v1h4v5h-4V6H6z" fill="#fff" />
            </svg>
            <svg width="13" height="12" viewBox="0 0 13 12">
              <path d="m3 0 3 2-3 2-3-2zM9 0l3 2-3 2-3-2zM3 4l3 2-3 2-3-2zM9 4l3 2-3 2-3-2zM6 7l3 2-3 2-3-2z" fill="#9bd3f4" />
              <circle cx="10" cy="9" r="3" fill="#55b848" />
            </svg>
            <svg width="14" height="12" viewBox="0 0 14 12">
              <path d="M5 2h8v6H5zM7 10.500h5M1 1v3h3V1M2.500 4v7" fill="none" stroke="#fff" strokeWidth="1.200" />
            </svg>
            <svg width="12" height="12" viewBox="0 0 12 12">
              <path d="M0 4h2l3-3v10L2 8H0z" fill="#fff" />
              <path d="M7 3.500q2 2.500 0 5M9 2q3 4 0 8" fill="none" stroke="#fff" />
            </svg>
            <Clock>
              10:12 AM
              <br />
              8/15/2014
            </Clock>
          </Tray>
        </Taskbar>
      </Shell>
    </ThemeProvider>
  );
};

export default App;
